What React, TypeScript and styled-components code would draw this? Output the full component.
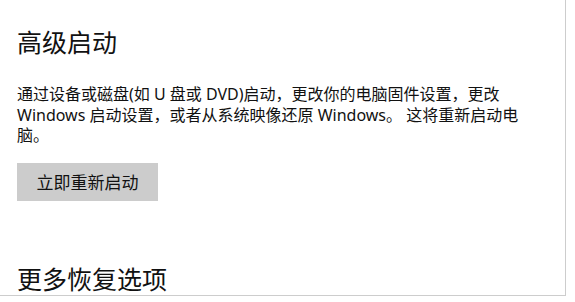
import styled, { createGlobalStyle } from 'styled-components';

const GlobalStyle = createGlobalStyle`
    html, body {
        margin: 0;
        padding: 0;
        background: #ffffff;
    }
    body {
        font-family: "Noto Sans", "Noto Sans CJK SC", sans-serif;
        color: #111111;
    }
`

const Page = styled.div`
    box-sizing: border-box;
    width: 566px;
    height: 296px;
    border-right: 1px solid #cdcdcd;
    border-bottom: 1px solid #cdcdcd;
    padding-left: 17px;
    overflow: hidden;
    display: flex;
    flex-direction: column;
    align-items: flex-start;
`

const Heading = styled.h2<{ $top: number }>`
    margin: ${p => p.$top}px 0 0 0;
    font-size: 25px;
    line-height: 32px;
    font-weight: 400;
    color: #111111;
`

const Description = styled.p`
    margin: 26px 0 0 0;
    width: 506px;
    font-size: 16px;
    line-height: 20.5px;
    color: #111111;
`

const Button = styled.button`
    margin-top: 17px;
    width: 141px;
    height: 40px;
    border: none;
    background: #cccccc;
    font-family: inherit;
    font-size: 17px;
    color: #111111;
    padding: 0;
    cursor: pointer;
`

const App = () => {
    return (
        <>
            <GlobalStyle />
            <Page>
                <Heading $top={26}>高级启动</Heading>
                <Description>
                    通过设备或磁盘(如 U 盘或 DVD)启动，更改你的电脑固件设置，更改 Windows 启动设置，或者从系统映像还原 Windows。 这将重新启动电脑。
                </Description>
                <Button>立即重新启动</Button>
                <Heading $top={62}>更多恢复选项</Heading>
            </Page>
        </>
    )
}

export default App
